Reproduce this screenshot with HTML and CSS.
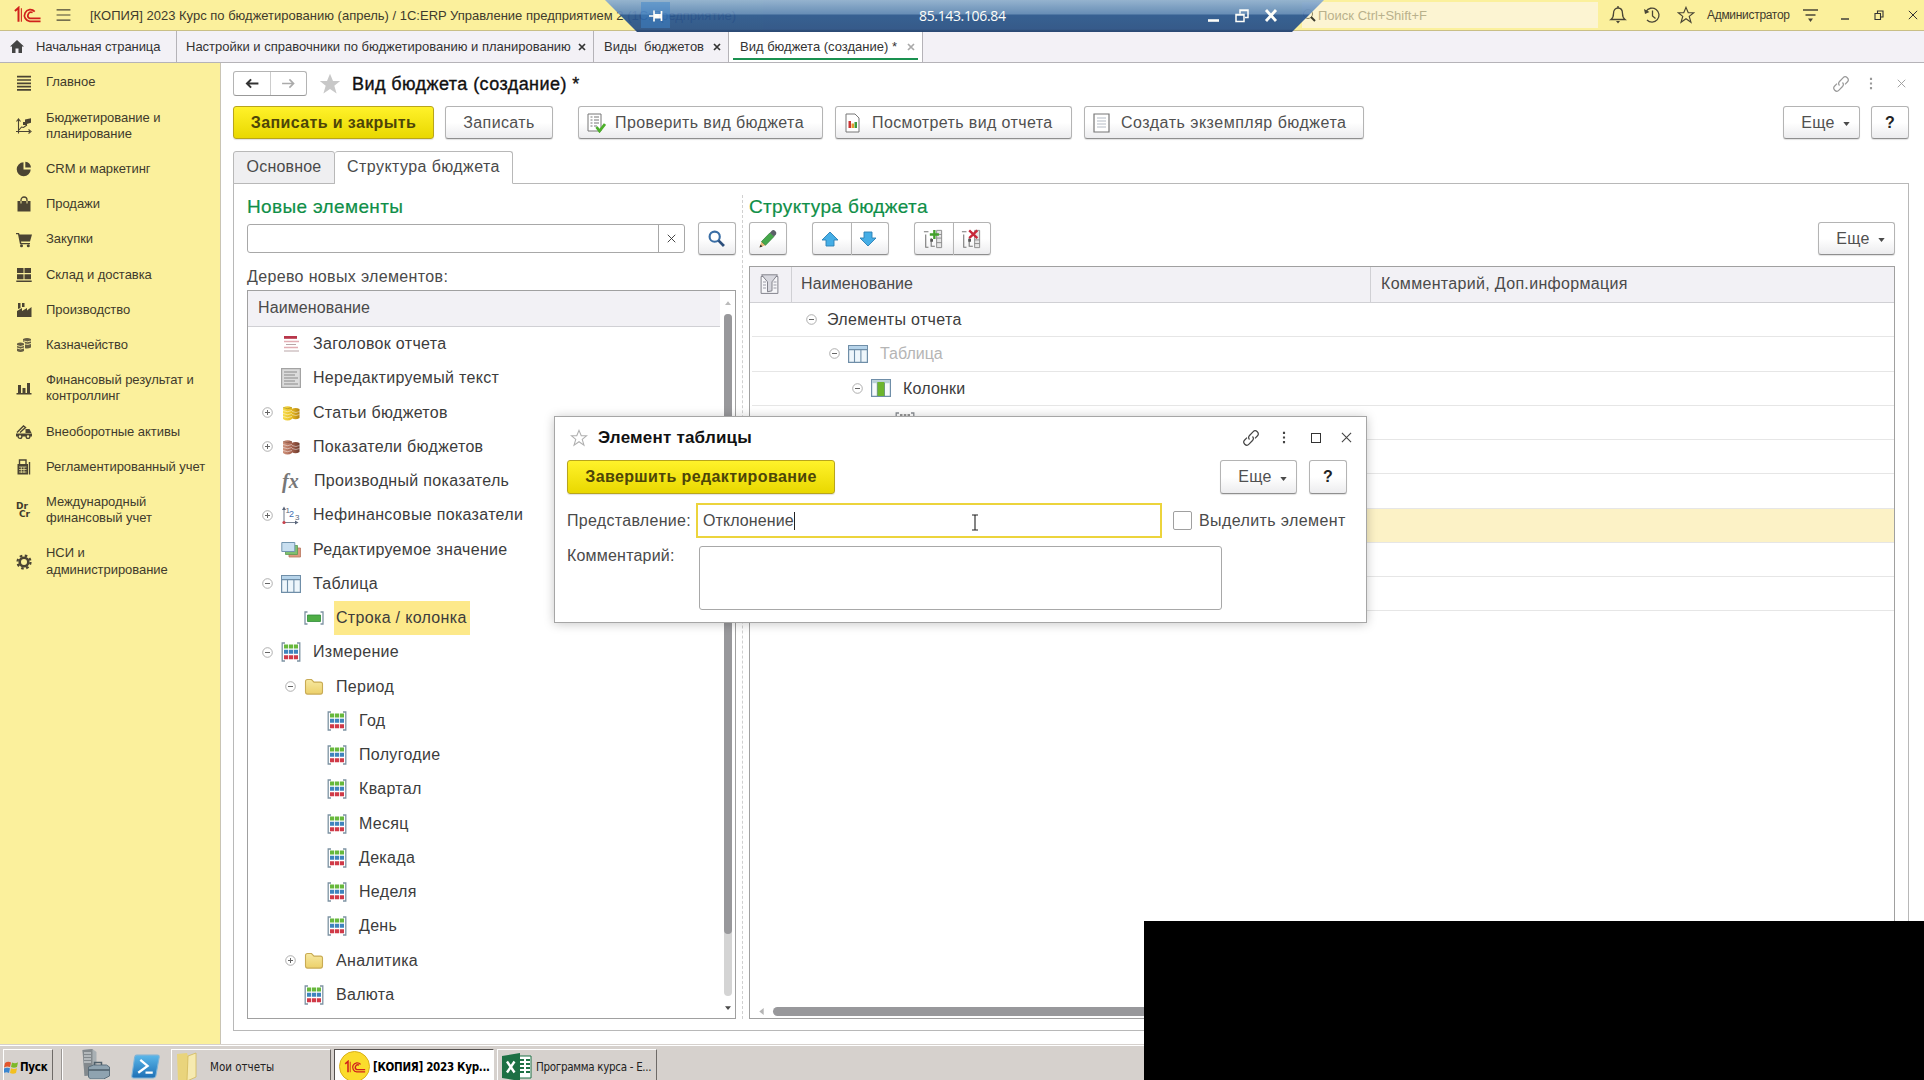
FILE: index.html
```html
<!DOCTYPE html>
<html lang="ru">
<head>
  <meta charset="UTF-8">
  <title>Вид бюджета (создание)</title>
  <link rel="stylesheet" href="styles.css">
</head>
<body>

  <!-- Общие иконки -->
  <svg class="sprite" aria-hidden="true">
    <defs>
      <linearGradient id="gGold" x1="0" x2="1"><stop offset="0" stop-color="#f6dc4a"/><stop offset=".5" stop-color="#e8bd22"/><stop offset="1" stop-color="#b5820f"/></linearGradient>
      <linearGradient id="gBrown" x1="0" x2="1"><stop offset="0" stop-color="#d0947c"/><stop offset=".5" stop-color="#a86450"/><stop offset="1" stop-color="#6e3a2c"/></linearGradient>
      <linearGradient id="gFolder" x1="0" y1="0" x2="0" y2="1"><stop offset="0" stop-color="#f7e9a2"/><stop offset="1" stop-color="#ecd06a"/></linearGradient>
      <linearGradient id="gBlue" x1="0" y1="0" x2="0" y2="1"><stop offset="0" stop-color="#5cb8ea"/><stop offset="1" stop-color="#1d6fb5"/></linearGradient>
    </defs>
    <symbol id="plus" viewBox="0 0 11 11"><circle cx="5.5" cy="5.5" r="4.8" fill="#fff" stroke="#a6a6a6" stroke-width=".9"/><path d="M3 5.5h5M5.5 3v5" stroke="#666" stroke-width="1"/></symbol>
    <symbol id="minus" viewBox="0 0 11 11"><circle cx="5.5" cy="5.5" r="4.8" fill="#fff" stroke="#a6a6a6" stroke-width=".9"/><path d="M3 5.5h5" stroke="#666" stroke-width="1"/></symbol>
    <symbol id="dim" viewBox="0 0 20 20">
      <path d="M4 1H1.2v18H4M16 1h2.8v18H16" fill="none" stroke="#7d93a3" stroke-width="1.3"/>
      <path d="M3 2.500h4.200v4H3zM8 2.500h4v4H8zM12.800 2.500H17v4h-4.200z" fill="#67b83c"/>
      <path d="M3 7.800h4.200v4H3zM8 7.800h4v4H8zM12.800 7.800H17v4h-4.200z" fill="#3f84bd"/>
      <path d="M3 13.200h4.200v4H3zM8 13.200h4v4H8zM12.800 13.200H17v4h-4.200z" fill="#d03a48"/>
    </symbol>
    <symbol id="folder" viewBox="0 0 20 20"><path d="M1.500 4.500q0-2 2-2h4l2.500 2.600h6.500q2 0 2 2v8q0 2-2 2h-13q-2 0-2-2z" fill="url(#gFolder)" stroke="#c9ab54" stroke-width="1.100"/></symbol>
    <symbol id="table" viewBox="0 0 20 18">
      <path d="M.6.6h18.800v16.800H.6z" fill="#eef6fb" stroke="#6f8ea8" stroke-width="1.2"/>
      <path d="M1.200 1.200h17.600v3.200H1.200z" fill="#b4d3ea"/><path d="M6.500 4.400V17M12.900 4.400V17M1 4.600h18" stroke="#6f8ea8" stroke-width="1.1"/>
    </symbol>
    <symbol id="columns" viewBox="0 0 20 18">
      <path d="M.6.6h18.800v16.800H.6z" fill="#f6fafc" stroke="#6f8ea8" stroke-width="1.2"/>
      <path d="M1.200 1.200h17.600v3H1.200z" fill="#b9d0d8"/><path d="M6.300 3h7.200v14H6.300z" fill="#6cb52d"/><path d="M13.500 4v13M6.300 4v13" stroke="#5f8a70" stroke-width=".8"/>
    </symbol>
    <symbol id="coins" viewBox="0 0 20 20">
      <path d="M10.500 6q4-2 8 0v9q-4 2.500-8 0zM2 4.500q4.500-2.600 9 0v11.500q-4.500 3-9 0z"/>
      <path d="M2 7.500q4.500 2.400 9 0M2 10.500q4.500 2.400 9 0M2 13.500q4.500 2.400 9 0M11 8.500q4 2 7.500 0M11 11.500q4 2 7.500 0" fill="none" stroke="#fff" stroke-opacity=".55" stroke-width=".9"/>
      <path d="M2 4.500q4.500 2.400 9 0" fill="none" stroke="#000" stroke-opacity=".25" stroke-width=".8"/>
    </symbol>
    <symbol id="cell" viewBox="0 0 20 14"><path d="M3.500 1H1v12h2.500M16.500 1H19v12h-2.500" fill="none" stroke="#7d93a3" stroke-width="1.300"/><path d="M3.500 4h13v6.500h-13z" fill="#4fae45" stroke="#2f8c3a" stroke-width=".8"/></symbol>
    <symbol id="link" viewBox="0 0 18 18"><path d="M7.500 10.500a3 3 0 0 1 0-4l3.500-3.700a3 3 0 0 1 4.300 4.200L13 9.400M10.500 7.500a3 3 0 0 1 0 4L7 15.200A3 3 0 0 1 2.700 11L5 8.600" fill="none" stroke="currentColor" stroke-width="1.200"/></symbol>
    <symbol id="dots" viewBox="0 0 4 16"><path d="M.7 1h2.600v2.600H.7zM.7 6.700h2.600v2.600H.7zM.7 12.400h2.600V15H.7z" fill="currentColor"/></symbol>
    <symbol id="cross" viewBox="0 0 12 12"><path d="M1 1l10 10M11 1L1 11" stroke="currentColor" stroke-width="1.2" fill="none"/></symbol>
    <symbol id="crossBold" viewBox="0 0 8 8"><path d="M1 1l6 6M7 1L1 7" stroke="currentColor" stroke-width="1.700" fill="none"/></symbol>
    <symbol id="star" viewBox="0 0 20 20"><path d="M10 1.500l2.500 6h6l-4.900 4 1.900 6.500L10 14.100 4.500 18l1.900-6.500-4.900-4h6z"/></symbol>
    <symbol id="caret" viewBox="0 0 8 5"><path d="M0 0h8L4 5z" fill="#4a4a4a"/></symbol>
    <symbol id="logo1c" viewBox="0 0 30 20">
      <path d="M1 5.500L5 2v15.500" fill="none" stroke="currentColor" stroke-width="2.200"/>
      <path d="M8.200 2.500v15M2.500 7" fill="none" stroke="currentColor" stroke-width="1.200"/>
      <path d="M23 6.200A6.500 6.500 0 1 0 17.500 17H29.500M20.700 7.300A3.600 3.600 0 1 0 17.500 13.800H29.500" fill="none" stroke="currentColor" stroke-width="1.900"/>
    </symbol>
  </svg>

  <div class="screen">
    <header class="titlebar">
      <svg class="logo"><use href="#logo1c"/></svg>
      <svg class="burger" viewBox="0 0 15 13"><path d="M0 1h15M0 6.500h15M0 12h15" stroke="#4a4636" stroke-width="1.300"/></svg>
      <span class="app-title">[КОПИЯ] 2023 Курс по бюджетированию (апрель) / 1С:ERP Управление предприятием 2 (1С:Предприятие)</span>
      <div class="search">
        <svg viewBox="0 0 14 14"><circle cx="6" cy="6" r="4.500" fill="none" stroke="#8c8560"/><path d="M9 9l4 4" stroke="#3c3a2c" stroke-width="2"/></svg>
        <span>Поиск Ctrl+Shift+F</span>
      </div>
      <div class="top-icons">
        <svg viewBox="0 0 18 18"><path d="M2 13.500c2-1.500 2.500-3 2.500-6C4.500 4 6.500 2 9 2s4.500 2 4.500 5.500c0 3 .5 4.500 2.500 6z" fill="none" stroke="#4a4636" stroke-width="1.300"/><path d="M7 15h4l-2 2.500zM8.300 0h1.400v2H8.300z" fill="#4a4636"/></svg>
        <svg viewBox="0 0 18 18"><path d="M3 5.500A7 7 0 1 1 4 14" fill="none" stroke="#4a4636" stroke-width="1.300"/><path d="M1 3l1 5 4.500-2z" fill="#4a4636"/><path d="M9.500 4.500V10l3 2.500" fill="none" stroke="#4a4636" stroke-width="1.300"/></svg>
        <svg class="star-line"><use href="#star"/></svg>
      </div>
      <span class="user">Администратор</span>
      <svg class="user-menu" viewBox="0 0 15 13"><path d="M0 1h15M2.500 6h10" stroke="#4a4636" stroke-width="1.300"/><path d="M5 9.500h5L7.500 13z" fill="#4a4636"/></svg>
      <div class="win-btns">
        <svg viewBox="0 0 10 10"><path d="M1 9h8" stroke="#333" stroke-width="1.400"/></svg>
        <svg viewBox="0 0 10 10"><path d="M1 3.500h5.500V9.500H1zM3.500 3.500V1H9v6H6.500" fill="none" stroke="#333" stroke-width="1.100"/></svg>
        <svg><use href="#cross"/></svg>
      </div>
    </header>

    <nav class="open-tabs">
      <div class="open-tab home">
        <svg viewBox="0 0 14 13"><path d="M7 0l7 6.500h-2V13H8.500V8.500h-3V13H2V6.500H0z" fill="#444"/></svg>
        <span>Начальная страница</span>
      </div>
      <div class="open-tab settings"><span>Настройки и справочники по бюджетированию и планированию</span><svg class="tab-x"><use href="#crossBold"/></svg></div>
      <div class="open-tab kinds"><span>Виды&nbsp; бюджетов</span><svg class="tab-x"><use href="#crossBold"/></svg></div>
      <div class="open-tab current"><span>Вид бюджета (создание) *</span><svg class="tab-x dim"><use href="#crossBold"/></svg></div>
    </nav>

    <div class="work">
      <aside class="sidebar">
        <a class="sec"><svg viewBox="0 0 16 16"><path d="M1 1.700h14M1 5h14M1 8.300h14M1 11.600h14M1 14.900h14" stroke="#4b4433" stroke-width="1.700"/></svg><span>Главное</span></a>
        <a class="sec two"><svg viewBox="0 0 16 16"><path d="M2.500 15.500V2M0 13.500h14M.5 3.500L2.500 1l2 2.500M12.500 11.500l2.500 2-2.500 2M3 12l2.500-3 2 .5L11 7" fill="none" stroke="#4b4433" stroke-width="1.100"/><path d="M9 1.500l6-1.300v4.500L9 6.500zM7 4h4v3H7z" fill="#4b4433"/></svg><span>Бюджетирование и<br>планирование</span></a>
        <a class="sec"><svg viewBox="0 0 16 16"><path d="M7.500 1.300V8.500h7.200A7 7 0 1 1 7.500 1.300z" fill="#4b4433"/><path d="M9.300.8A6.600 6.600 0 0 1 15 6.600H9.300z" fill="#4b4433"/></svg><span>CRM и маркетинг</span></a>
        <a class="sec"><svg viewBox="0 0 16 16"><path d="M1.500 5h13v10.500h-13z" fill="#4b4433"/><path d="M5 7.500V4a3 3 0 0 1 6 0v3.500" fill="none" stroke="#4b4433" stroke-width="1.300"/><path d="M5 5v2.500M11 5v2.500" stroke="#fbf0a0" stroke-width="1"/></svg><span>Продажи</span></a>
        <a class="sec"><svg viewBox="0 0 16 16"><path d="M0 1h3l.6 1.500H16L14 9.500H5l.3 1.500H14v1.300H4L2 2.300H0z" fill="#4b4433"/><circle cx="5.500" cy="13.800" r="1.500" fill="#4b4433"/><circle cx="12.300" cy="13.800" r="1.500" fill="#4b4433"/></svg><span>Закупки</span></a>
        <a class="sec"><svg viewBox="0 0 16 16"><path d="M1 1h6.500v5H1zM8.500 1H15v5H8.500zM1 7.200h6.500v5H1zM8.500 7.200H15v5H8.500zM.3 13.500h15.400v1.600H.3z" fill="#4b4433"/></svg><span>Склад и доставка</span></a>
        <a class="sec"><svg viewBox="0 0 16 16"><path d="M1 15V9l5-3v3l5-3v2.500L15.500 5v10zM2 1h2.500v5L2 7zM6 1h2.500v4L6 5z" fill="#4b4433"/></svg><span>Производство</span></a>
        <a class="sec"><svg viewBox="0 0 16 16"><path d="M1 6.500q3.500-2 7 0v7.500q-3.500 2-7 0zM7 2q4-1.800 8 0v8.500q-3 1.500-6 .8V5.500Q8 5 7 4.800z" fill="#4b4433" fill-opacity=".85"/><path d="M1 8.500q3.500 2 7 0M1 11q3.500 2 7 0M7.500 4q4 1.500 7.500 0M9 7q3 1 6-.5" stroke="#fbf0a0" stroke-width=".9" fill="none"/></svg><span>Казначейство</span></a>
        <a class="sec two"><svg viewBox="0 0 16 16"><path d="M2 5h3v8H2zM6.500 8h3v5h-3zM11 3h3v10h-3zM.5 13h15v1.500H.5z" fill="#4b4433"/></svg><span>Финансовый результат и<br>контроллинг</span></a>
        <a class="sec"><svg viewBox="0 0 16 16"><path d="M0 9.500h16v3H0zM9.500 5h4l2 4H9.500z" fill="#4b4433"/><path d="M1 8.500L7.500 2l2 1.500L4 8.500" fill="none" stroke="#4b4433" stroke-width="1.400"/><circle cx="4" cy="12.500" r="1.900" fill="#fbf0a0" stroke="#4b4433" stroke-width="1.300"/><circle cx="12" cy="12.500" r="1.900" fill="#fbf0a0" stroke="#4b4433" stroke-width="1.300"/></svg><span>Внеоборотные активы</span></a>
        <a class="sec"><svg viewBox="0 0 16 16"><path d="M1.500 5h10.500v10.500H1.500z" fill="#4b4433"/><path d="M3.500 5V1h6.500v4" fill="none" stroke="#4b4433" stroke-width="1.400"/><path d="M13.500 3v12.500" stroke="#4b4433" stroke-width="1.400"/><path d="M3 8h7.500M3 10.500h7.500M3 13h7.500M5.300 8v6M8 8v6" stroke="#fbf0a0" stroke-width=".7"/></svg><span>Регламентированный учет</span></a>
        <a class="sec two"><b class="drcr">Dr<i>Cr</i></b><span>Международный<br>финансовый учет</span></a>
        <a class="sec two"><svg viewBox="0 0 16 16"><circle cx="8" cy="8" r="4.300" fill="none" stroke="#4b4433" stroke-width="2.600"/><circle cx="8" cy="8" r="6.500" fill="none" stroke="#4b4433" stroke-width="2.200" stroke-dasharray="2.600 2.505"/></svg><span>НСИ и<br>администрирование</span></a>
      </aside>

      <main class="form">
        <div class="form-head">
          <div class="nav-btns">
            <svg viewBox="0 0 16 12"><path d="M15 6H3M7 1.500L2.500 6 7 10.500" fill="none" stroke="#333" stroke-width="2.200"/></svg>
            <svg viewBox="0 0 16 12"><path d="M1 6h12M9 1.500L13.500 6 9 10.500" fill="none" stroke="#aaa" stroke-width="1.800"/></svg>
          </div>
          <svg class="fav"><use href="#star"/></svg>
          <h1>Вид бюджета (создание) *</h1>
          <div class="head-tools">
            <svg class="i-link"><use href="#link"/></svg>
            <svg class="i-dots"><use href="#dots"/></svg>
            <svg class="i-x"><use href="#cross"/></svg>
          </div>
        </div>

        <div class="commands">
          <button class="btn primary b-save-close">Записать и закрыть</button>
          <button class="btn b-save">Записать</button>
          <button class="btn with-icon b-check"><svg viewBox="0 0 20 20"><path d="M2 1h13v17H2z" fill="#fff" stroke="#777"/><path d="M4.500 4h2M8 4h5M4.500 7h2M8 7h5M4.500 10h2M8 10h5M4.500 13h2M8 13h3" stroke="#777"/><path d="M10.500 14l3 4L19 11" fill="none" stroke="#4caf2a" stroke-width="2.800"/></svg>Проверить вид бюджета</button>
          <button class="btn with-icon b-view"><svg viewBox="0 0 20 20"><path d="M3 1h9l4 4v14H3z" fill="#fff" stroke="#777"/><path d="M5.500 8h2.500v7H5.500z" fill="#c33"/><path d="M8.500 10.500H11V15H8.500z" fill="#e39a2e"/><path d="M11.500 9H14v6h-2.500z" fill="#3d9a3a"/></svg>Посмотреть вид отчета</button>
          <button class="btn with-icon b-create"><svg viewBox="0 0 20 20"><path d="M2 1h15v18H2z" fill="#fff" stroke="#777" stroke-width="1.200"/><path d="M5 5h9M5 8h9M5 11h9M5 14h9" stroke="#b5bcc6"/></svg>Создать экземпляр бюджета</button>
          <button class="btn more push">Еще<svg><use href="#caret"/></svg></button>
          <button class="btn help">?</button>
        </div>

        <div class="page-tabs">
          <div class="page-tab t1">Основное</div>
          <div class="page-tab t2 active">Структура бюджета</div>
        </div>

        <div class="panel">
          <section class="left">
            <h2>Новые элементы</h2>
            <div class="find-row">
              <div class="find"><span></span><svg><use href="#cross"/></svg></div>
              <button class="btn find-btn"><svg viewBox="0 0 16 16"><circle cx="6.300" cy="6.300" r="4.800" fill="none" stroke="#3a6ea5" stroke-width="2"/><path d="M10 10l5 5" stroke="#2c4f7c" stroke-width="2.600"/></svg></button>
            </div>
            <div class="label">Дерево новых элементов:</div>
            <div class="tree">
              <div class="tree-list">
                <div class="thead">Наименование</div>
                <div class="row"><i></i><svg viewBox="0 0 20 20"><path d="M3 2h13v2.800H3z" fill="#b8364a"/><path d="M3 7.500h15M3 13.500h14" stroke="#e2aeb4" stroke-width="1.300"/><path d="M5 10.500h10M3 17h15" stroke="#b9a6a8" stroke-width="1.200"/></svg><span>Заголовок отчета</span></div>
                <div class="row"><i></i><svg viewBox="0 0 20 20"><path d="M.6.6h18.800v18.800H.6z" fill="#dcdcdc" stroke="#a3a3a3" stroke-width="1.200"/><path d="M3 4h13M3 7h11M3 10h14M3 13h11M3 16h14" stroke="#8a8a8a" stroke-width="1.200"/></svg><span>Нередактируемый текст</span></div>
                <div class="row"><svg class="ex"><use href="#plus"/></svg><svg fill="url(#gGold)"><use href="#coins"/></svg><span>Статьи бюджетов</span></div>
                <div class="row"><svg class="ex"><use href="#plus"/></svg><svg fill="url(#gBrown)"><use href="#coins"/></svg><span>Показатели бюджетов</span></div>
                <div class="row"><i></i><b class="fx">fx</b><span>Производный показатель</span></div>
                <div class="row"><svg class="ex"><use href="#plus"/></svg><svg viewBox="0 0 20 20"><path d="M3 4v13.500h12" fill="none" stroke="#7a8494" stroke-width="1.100"/><path d="M1 5l2-3.500L5 5zM14 15.500l3.500 2-3.500 2z" fill="#59657a"/><circle cx="3" cy="17.500" r="1.600" fill="#c8414b"/><text x="4.500" y="7.500" class="tiny">1</text><text x="8" y="12" class="tiny mid">2</text><text x="14" y="14.500" class="tiny">3</text></svg><span>Нефинансовые показатели</span></div>
                <div class="row"><i></i><svg viewBox="0 0 20 20"><path d="M8 8h11.500v9H8z" fill="#dd9a80" stroke="#b9765e" stroke-width=".8"/><path d="M4.500 5.500h12v9h-12z" fill="#7fbf6f" stroke="#5c9a53" stroke-width=".8"/><path d="M.8 2.500h13v9H.8z" fill="#c8dff0" stroke="#7296b0"/></svg><span>Редактируемое значение</span></div>
                <div class="row"><svg class="ex"><use href="#minus"/></svg><svg><use href="#table"/></svg><span>Таблица</span></div>
                <div class="row l1"><i></i><svg class="low"><use href="#cell"/></svg><span class="picked">Строка / колонка</span></div>
                <div class="row"><svg class="ex"><use href="#minus"/></svg><svg><use href="#dim"/></svg><span>Измерение</span></div>
                <div class="row l1"><svg class="ex"><use href="#minus"/></svg><svg><use href="#folder"/></svg><span>Период</span></div>
                <div class="row l2"><i></i><svg><use href="#dim"/></svg><span>Год</span></div>
                <div class="row l2"><i></i><svg><use href="#dim"/></svg><span>Полугодие</span></div>
                <div class="row l2"><i></i><svg><use href="#dim"/></svg><span>Квартал</span></div>
                <div class="row l2"><i></i><svg><use href="#dim"/></svg><span>Месяц</span></div>
                <div class="row l2"><i></i><svg><use href="#dim"/></svg><span>Декада</span></div>
                <div class="row l2"><i></i><svg><use href="#dim"/></svg><span>Неделя</span></div>
                <div class="row l2"><i></i><svg><use href="#dim"/></svg><span>День</span></div>
                <div class="row l1"><svg class="ex"><use href="#plus"/></svg><svg><use href="#folder"/></svg><span>Аналитика</span></div>
                <div class="row l1"><i></i><svg><use href="#dim"/></svg><span>Валюта</span></div>
              </div>
              <div class="vscroll">
                <svg class="up" viewBox="0 0 8 5"><path d="M0 5h8L4 0z" fill="#bbb"/></svg>
                <div class="vtrack"><div class="vthumb"></div></div>
                <svg class="down"><use href="#caret"/></svg>
              </div>
            </div>
          </section>

          <div class="splitter"></div>

          <section class="right">
            <h2>Структура бюджета</h2>
            <div class="tools">
              <button class="btn tool"><svg viewBox="0 0 20 20"><path d="M1.500 18.500l2-6 4 3.800z" fill="#e8b878"/><path d="M1.500 18.500l1-3 2 2z" fill="#333"/><path d="M3.500 12.500L12 3.800l4 3.700-8.500 8.800z" fill="#45a84b" stroke="#2c7a34" stroke-width=".7"/><path d="M12 3.800l2-2.300q1.500-1 3.300.6t.7 3.300L16 7.500z" fill="#5b6068"/></svg></button>
              <div class="pair arrows">
                <button class="btn tool"><svg viewBox="0 0 20 20"><path d="M10 3l8 8h-4v6H6v-6H2z" fill="#45aee6" stroke="#2b7fb3" stroke-width=".9"/></svg></button>
                <button class="btn tool"><svg viewBox="0 0 20 20"><path d="M10 17l8-8h-4V3H6v6H2z" fill="#45aee6" stroke="#2b7fb3" stroke-width=".9"/></svg></button>
              </div>
              <div class="pair">
                <button class="btn tool"><svg viewBox="0 0 20 22"><path d="M0 3h5M2 6v14h3M8 10v9h4" fill="none" stroke="#777" stroke-width="1.200"/><path d="M14 1.500h5.500v19H14z" fill="#e6e6e6" stroke="#888"/><path d="M14 6h5.500M14 10h5.500M14 15h5.500" stroke="#888"/><path d="M7 11h3v3H7z" fill="#555"/><path d="M11.500 1v10M6.500 6h10" stroke="#43a02c" stroke-width="2.600"/></svg></button>
                <button class="btn tool"><svg viewBox="0 0 20 22"><path d="M0 3h5M2 6v14h3M8 10v9h4" fill="none" stroke="#777" stroke-width="1.200"/><path d="M14 1.500h5.500v19H14z" fill="#e6e6e6" stroke="#888"/><path d="M14 12h5.500M14 16h5.500" stroke="#888"/><path d="M7 11h3v3H7z" fill="#555"/><path d="M8 1.500l9 8.500M17 1.500L8 10" stroke="#c8283a" stroke-width="2.600"/></svg></button>
              </div>
              <button class="btn more push">Еще<svg><use href="#caret"/></svg></button>
            </div>
            <div class="grid">
              <div class="ghead">
                <div class="c-mark"><svg viewBox="0 0 18 20"><path d="M.6 2.500h16.800v16.900H.6z" fill="#f6f6f9" stroke="#83838c"/><path d="M1 .8h16l-5.500 7v9l-4.500 1V7.800z" fill="#d7d7de" stroke="#83838c"/><path d="M2.500 8h3M2.500 11h3M2.500 14h3M13 8h3M13 11h3M13 14h3" stroke="#9a9aa5"/></svg></div>
                <div class="c-name">Наименование</div>
                <div class="c-note">Комментарий, Доп.информация</div>
              </div>
              <div class="grow r0"><svg class="ex"><use href="#minus"/></svg><span>Элементы отчета</span></div>
              <div class="grow r1"><svg class="ex"><use href="#minus"/></svg><svg class="ic"><use href="#table"/></svg><span>Таблица</span></div>
              <div class="grow r2"><svg class="ex"><use href="#minus"/></svg><svg class="ic"><use href="#columns"/></svg><span>Колонки</span></div>
              <div class="grow r3"><svg class="ic" viewBox="0 0 20 20"><path d="M4 1H1.200v18H4M16 1h2.800v18H16" fill="none" stroke="#8a8f94" stroke-width="1.300"/><path d="M5 3h2.500M8.800 3h2.500M12.500 3H15" stroke="#777" stroke-width="1.600"/></svg></div>
              <div class="grow"></div>
              <div class="grow"></div>
              <div class="grow selected"></div>
              <div class="grow"></div>
              <div class="grow"></div>
              <div class="hscroll">
                <svg viewBox="0 0 5 8"><path d="M5 0v8L0 4z" fill="#b5b5b5"/></svg>
                <div class="hthumb"></div>
              </div>
            </div>
          </section>
        </div>
      </main>
    </div>

    <footer class="taskbar">
      <div class="start"><svg viewBox="0 0 16 16"><path d="M1 4q3-2 6-.5L6 8Q3 6.800 0 8.500z" fill="#e2562c"/><path d="M8 3.500q3 1.500 6-.2L13 8q-3 1.500-6 0z" fill="#7db928"/><path d="M0 9.500q3-1.500 6-.3L5 14q-2.500-1.400-5.500 0z" fill="#3b86d0"/><path d="M7 9.300q3 1.500 6 0L12 14q-3 1.500-6 0z" fill="#f3c01e"/></svg><b>Пуск</b></div>
      <div class="sep"></div>
      <svg class="q-server" viewBox="0 0 28 30"><path d="M1 1l10-1 4 3v23L3 27z" fill="#a9b0b4"/><path d="M1 1l10-1v26l-8 1z" fill="#83898d"/><path d="M2.500 4h7M2.500 7h7M2.500 10h7M2.500 13h7" stroke="#e3e7e9" stroke-width="1.200"/><path d="M7 18l5-2h13l3 2v9l-6 3H9l-2-2z" fill="#8fa3b0" stroke="#5c6f7c"/><path d="M7 21h21M13 16v-2.500h7V16" fill="none" stroke="#4f5f6a" stroke-width="1.500"/></svg>
      <svg class="q-ps" viewBox="0 0 28 24"><path d="M5.500 1h20q2 0 1.700 2L24 21q-.5 2-2.500 2h-19q-2 0-1.700-2L3.500 3Q4 1 5.500 1z" fill="url(#gBlue)" stroke="#7fb4d8"/><path d="M9 5.500l7 6L7 18M14 18h7" fill="none" stroke="#fff" stroke-width="2.200"/></svg>
      <div class="task folder"><svg viewBox="0 0 22 30"><path d="M1 2l10-1 1 3v24L2 29z" fill="#e9d47c"/><path d="M12 4l8-3v24l-9 4z" fill="#f6eab0" stroke="#d3b95a" stroke-width=".8"/></svg><span>Мои отчеты</span></div>
      <div class="task onec"><div class="ball"><svg><use href="#logo1c"/></svg></div><span>[КОПИЯ] 2023 Кур...</span></div>
      <div class="task excel"><svg viewBox="0 0 30 28"><path d="M16 3h13v22H16z" fill="#fff" stroke="#1d7044"/><path d="M18 7h4M24 7h4M18 11h4M24 11h4M18 15h4M24 15h4M18 19h4M24 19h4" stroke="#1d7044" stroke-width="2"/><path d="M0 3l18-3v28L0 25z" fill="#1d7044"/><path d="M5 8.500l7.500 11M12.500 8.500L5 19.500" stroke="#fff" stroke-width="2.400"/></svg><span>Программа курса - E...</span></div>
    </footer>
  </div>

  <!-- Окно редактирования элемента -->
  <div class="dialog">
    <div class="dlg-head">
      <svg class="dlg-star"><use href="#star"/></svg>
      <h3>Элемент таблицы</h3>
      <svg class="i-link"><use href="#link"/></svg>
      <svg class="i-dots"><use href="#dots"/></svg>
      <div class="i-max"></div>
      <svg class="i-x"><use href="#cross"/></svg>
    </div>
    <div class="dlg-cmds">
      <button class="btn primary b-finish">Завершить редактирование</button>
      <button class="btn more push">Еще<svg><use href="#caret"/></svg></button>
      <button class="btn help">?</button>
    </div>
    <div class="field">
      <label class="f-view">Представление:</label>
      <div class="edit"><span>Отклонение</span>
        <svg class="ibeam" viewBox="0 0 8 17"><path d="M1 1h2.500L4 1.500 4.500 1H7M4 1v15M1 16h2.500l.5-.5.5.5H7" fill="none" stroke="#222" stroke-width="1.100"/></svg>
      </div>
      <div class="check"></div>
      <span class="check-text">Выделить элемент</span>
    </div>
    <div class="field memo">
      <label class="f-comment">Комментарий:</label>
      <div class="area"></div>
    </div>
  </div>

  <!-- Панель удаленного рабочего стола -->
  <div class="rdp">
    <div class="pin"><svg viewBox="0 0 14 14"><path d="M0 7h5M5 1.500v11M12.500 2v10" fill="none" stroke="#fff" stroke-width="1.700"/><path d="M5 5h7v4.500H5z" fill="#fff"/></svg></div>
    <span>85.143.106.84</span>
    <div class="rdp-btns">
      <svg viewBox="0 0 14 14"><path d="M2 12h11" stroke="#fff" stroke-width="2.600"/></svg>
      <svg viewBox="0 0 14 14"><path d="M1 6h8v7H1zM1 6.500h8M5 5V1.500h8V9h-3M5 2h8" fill="none" stroke="#fff" stroke-width="1.500"/></svg>
      <svg viewBox="0 0 14 14"><path d="M2 1.500l10 11M12 1.500l-10 11" stroke="#fff" stroke-width="2.800"/></svg>
    </div>
  </div>

  <div class="camera"></div>

</body>
</html>
```
FILE: styles.css
```css
* {
  box-sizing: border-box;
}

body {
  margin: 0;
  width: 1924px;
  height: 1080px;
  overflow: hidden;
  position: relative;
  background: #fff;
  color: #4a4a4a;
  font-family: "Liberation Sans", Arial, sans-serif;
  font-size: 16px;
}

h1, h2, h3 {
  margin: 0;
  font-weight: normal;
}

svg {
  display: block;
  flex: none;
}

.sprite {
  position: absolute;
  width: 0;
  height: 0;
}

.screen {
  display: flex;
  flex-direction: column;
  height: 1080px;
}

/* Заголовок приложения */
.titlebar {
  display: flex;
  align-items: center;
  height: 31px;
  padding-left: 12px;
  background: #fbf09c;
  border-bottom: 1px solid #c9bf86;
  color: #3f3b2c;
  font-size: 13px;
  white-space: nowrap;
}

.logo {
  width: 31px;
  height: 18px;
  color: #d0211c;
}

.burger {
  width: 15px;
  height: 12px;
  margin: 0 19px 0 13px;
}

.app-title {
  width: 1212px;
}

.search {
  display: flex;
  align-items: center;
  width: 296px;
  height: 26px;
  background: #fcf4d2;
  color: #b9b18c;
}

.search svg {
  width: 14px;
  height: 14px;
  margin: 0 2px 0 0;
}

.top-icons {
  display: flex;
  gap: 16px;
  margin-left: 11px;
}

.top-icons svg {
  width: 18px;
  height: 18px;
}

.star-line {
  fill: none;
  stroke: #4a4636;
  stroke-width: 1.3;
}

.user {
  width: 83px;
  margin-left: 12px;
  font-size: 12px;
  letter-spacing: -0.3px;
}

.user-menu {
  width: 15px;
  height: 13px;
  margin-left: 13px;
}

.win-btns {
  display: flex;
  gap: 24px;
  margin-left: 22px;
}

.win-btns svg {
  width: 10px;
  height: 10px;
  color: #333;
}

/* Открытые окна */
.open-tabs {
  display: flex;
  height: 32px;
  background: #f3f1f6;
  border-bottom: 1px solid #b5b3b8;
  font-size: 13px;
  color: #333;
  white-space: nowrap;
}

.open-tab {
  display: flex;
  align-items: center;
  border-right: 1px solid #b5b3b8;
}

.home {
  width: 177px;
  padding-left: 10px;
  gap: 12px;
  letter-spacing: -0.08px;
}

.home svg {
  width: 14px;
  height: 13px;
}

.settings {
  width: 417px;
  padding-left: 9px;
}

.kinds {
  width: 135px;
  padding-left: 10px;
}

.current {
  width: 194px;
  padding-left: 11px;
  background: #fff;
  box-shadow: inset 4px 0 #fff, inset -4px 0 #fff, inset 0 -2px #fff, inset 0 -4px #1a9150;
}

.tab-x {
  width: 8px;
  height: 8px;
  margin: 0 7px 0 auto;
  color: #333;
}

.tab-x.dim {
  color: #aaa;
}

.work {
  display: flex;
  height: 981px;
}

/* Разделы */
.sidebar {
  width: 221px;
  padding-top: 2px;
  background: #fbf09c;
  border-right: 1px solid #c9c4b4;
  color: #3f3b2c;
  font-size: 13px;
  line-height: 16.2px;
}

.sec {
  display: flex;
  align-items: center;
  height: 35.2px;
  padding-left: 16px;
  gap: 14px;
  white-space: nowrap;
  letter-spacing: -0.05px;
}

.sec.two {
  height: 51.4px;
}

.sec svg {
  width: 16px;
  height: 16px;
}

.drcr {
  width: 16px;
  font: bold 9px/8px "DejaVu Sans", sans-serif;
}

.drcr i {
  display: block;
  margin-left: 3px;
  font-style: normal;
}

/* Форма */
.form {
  width: 1703px;
  padding: 8px 15px 0 12px;
}

.form-head {
  display: flex;
  align-items: center;
  height: 25px;
}

.nav-btns {
  display: flex;
  width: 74px;
  height: 25px;
  border: 1px solid #b4b4b4;
  border-bottom-color: #999;
  border-radius: 3px;
}

.nav-btns svg {
  width: 36px;
  height: 11px;
  margin: 6px 0 0;
}

.nav-btns svg + svg {
  height: 23px;
  margin: 0;
  padding: 6px 0;
  border-left: 1px solid #ccc;
}

.fav {
  width: 24px;
  height: 24px;
  margin: 0 10px 0 11px;
  fill: #c8c8c8;
}

h1 {
  padding-top: 2px;
  color: #111;
  font-size: 18px;
  white-space: nowrap;
  letter-spacing: 0.43px;
  -webkit-text-stroke: 0.35px #111;
}

.head-tools {
  display: flex;
  align-items: center;
  margin-left: auto;
  color: #999;
}

.i-link {
  width: 18px;
  height: 18px;
}

.i-dots {
  width: 4px;
  height: 13px;
}

.head-tools .i-dots {
  margin: 0 24px 0 19px;
}

.head-tools .i-x {
  width: 9px;
  height: 9px;
  margin-right: 3px;
}

.btn {
  display: flex;
  align-items: center;
  justify-content: center;
  height: 33px;
  padding: 0;
  border: 1px solid #b4b4b4;
  border-bottom-color: #8f8f8f;
  border-radius: 3px;
  background: linear-gradient(#fff 50%, #ececee);
  color: #505050;
  font-family: inherit;
  font-size: 16px;
  white-space: nowrap;
  letter-spacing: 0.38px;
  box-shadow: 0 1px 1px rgba(0, 0, 0, 0.12);
}

.primary {
  border-color: #b8a51c;
  background: linear-gradient(#fff22a, #e9d800);
  color: #4d4508;
  font-weight: bold;
}

.commands {
  display: flex;
  margin-top: 10px;
}

.with-icon {
  justify-content: flex-start;
  padding-left: 7px;
  gap: 9px;
}

.with-icon svg {
  width: 20px;
  height: 20px;
}

.b-save-close { width: 201px; }
.b-save { width: 108px; margin-left: 11px; }
.b-check { width: 245px; margin-left: 25px; }
.b-view { width: 237px; margin-left: 12px; }
.b-create { width: 280px; margin-left: 12px; letter-spacing: 0.5px; }

.push {
  margin-left: auto;
}

.more {
  width: 77px;
  gap: 8px;
  padding-left: 8px;
}

.more svg {
  width: 7px;
  height: 4px;
  margin-top: 3px;
}

.help {
  width: 38px;
  margin-left: 11px;
  color: #222;
  font-weight: bold;
}

.page-tabs {
  display: flex;
  height: 33px;
  margin: 12px 0 -1px;
}

.page-tab {
  height: 33px;
  border: 1px solid #b8b8b8;
  border-radius: 3px 3px 0 0;
  background: #efeff1;
  line-height: 30px;
  text-align: center;
  letter-spacing: 0.2px;
}

.page-tab.active {
  border-bottom-color: #fff;
  border-left: 0;
  background: #fff;
  position: relative;
  letter-spacing: 0.42px;
}

.t1 { width: 102px; }
.t2 { width: 178px; }

.panel {
  display: flex;
  width: 1676px;
  height: 848px;
  padding: 11px 13px 11px;
  border: 1px solid #b8b8b8;
}

.left {
  display: flex;
  flex-direction: column;
  width: 489px;
}

h2 {
  height: 27px;
  color: #0f8f48;
  font-size: 19px;
  line-height: 24px;
  white-space: nowrap;
  letter-spacing: 0.35px;
  -webkit-text-stroke: 0.2px #0f8f48;
}

.find-row {
  display: flex;
  align-items: center;
  height: 33px;
}

.find {
  display: flex;
  width: 438px;
  height: 29px;
  margin-right: 13px;
  border: 1px solid #a8a8a8;
  border-radius: 3px;
}

.find span {
  flex: 1;
  border-right: 1px solid #a8a8a8;
}

.find svg {
  width: 9px;
  height: 9px;
  margin: 9px 8px;
  color: #333;
}

.find-btn {
  width: 38px;
  padding-right: 2px;
}

.find-btn svg {
  width: 17px;
  height: 17px;
}

.label {
  height: 35px;
  line-height: 43px;
  letter-spacing: 0.35px;
}

.tree {
  display: flex;
  height: 729px;
  border: 1px solid #a0a0a0;
}

.tree-list {
  width: 472px;
}

.thead {
  height: 36px;
  padding-left: 10px;
  border-bottom: 1px solid #d0d0d4;
  background: #f2f1f5;
  line-height: 34px;
  letter-spacing: 0.1px;
}

.row {
  display: flex;
  align-items: center;
  height: 34.25px;
  padding-left: 14px;
  color: #3c3c3c;
  white-space: nowrap;
  letter-spacing: 0.32px;
}

.row i,
.ex {
  width: 11px;
  height: 11px;
  flex: none;
}

.row svg:not(.ex) {
  width: 20px;
  height: 20px;
  margin: 0 12px 0 8px;
}

.row svg.low {
  height: 14px;
}

.l1 { padding-left: 37px; }
.l2 { padding-left: 60px; }

.picked {
  height: 34px;
  margin-left: -2px;
  padding: 0 3px 0 2px;
  background: #fde98a;
  line-height: 34px;
}

.fx {
  width: 28px;
  margin: 0 4px 0 9px;
  color: #777;
  font: italic bold 20px/20px "Liberation Serif", serif;
  letter-spacing: 0;
}

.tiny {
  fill: #59657a;
  font-size: 8px;
}

.tiny.mid {
  fill: #3f6fb5;
  font-size: 9px;
}

.vscroll {
  display: flex;
  flex-direction: column;
  align-items: center;
  width: 15px;
  padding-top: 10px;
}

.vscroll .up {
  width: 6px;
  height: 4px;
}

.vtrack {
  width: 8px;
  height: 682px;
  margin: 9px 0 10px;
  border-radius: 4px;
  background: #d4d4d4;
}

.vthumb {
  height: 620px;
  border-radius: 4px;
  background: #98989b;
}

.down {
  width: 6px;
  height: 4px;
}

.splitter {
  width: 0;
  margin: 0 6px 0 6px;
  border-left: 1px dashed #d0d0d0;
}

/* Структура */
.right {
  width: 1146px;
}

.tools {
  display: flex;
}

.tool {
  width: 38px;
}

.tool svg {
  width: 20px;
  height: 20px;
}

.pair {
  display: flex;
  margin-left: 25px;
}

.pair .tool {
  padding-right: 2px;
}

.arrows .tool {
  padding-right: 4px;
}

.pair .tool:first-child {
  width: 39px;
  border-right: 0;
  border-radius: 3px 0 0 3px;
}

.pair .tool:last-child {
  border-radius: 0 3px 3px 0;
}

.grid {
  display: flex;
  flex-direction: column;
  height: 753px;
  margin-top: 11px;
  border: 1px solid #a0a0a0;
}

.ghead {
  display: flex;
  height: 36px;
  border-bottom: 1px solid #d0d0d4;
  background: #f2f1f5;
  line-height: 33px;
}

.c-mark {
  width: 42px;
  padding: 7px 0 0 10px;
  border-right: 1px solid #d0d0d4;
}

.c-mark svg {
  width: 19px;
  height: 20px;
}

.c-name {
  width: 579px;
  padding-left: 9px;
  border-right: 1px solid #d0d0d4;
  letter-spacing: 0.1px;
}

.c-note {
  padding-left: 10px;
  letter-spacing: 0.32px;
}

.grow {
  display: flex;
  align-items: center;
  height: 34.25px;
  margin-left: 2px;
  border-bottom: 1px solid #e6e6e6;
  color: #3c3c3c;
  letter-spacing: 0.32px;
}

.grow .ic {
  width: 20px;
  height: 18px;
  margin-right: 12px;
}

.grow span {
  padding-top: 1px;
}

.r0 { padding-left: 54px; gap: 10px; }
.r1 { padding-left: 77px; color: #b5b5b5; letter-spacing: 0; }
.r2 { padding-left: 100px; letter-spacing: 0.2px; }
.r3 { padding-left: 143px; }

.r1 .ex,
.r2 .ex {
  margin-right: 8px;
}

.grow.r3 .ic {
  height: 20px;
}

.selected {
  background: #fcf2c6;
}

.hscroll {
  display: flex;
  align-items: center;
  margin: auto 0 2px 9px;
}

.hscroll svg {
  width: 5px;
  height: 7px;
}

.hthumb {
  width: 1090px;
  height: 9px;
  margin-left: 9px;
  border-radius: 5px;
  background: #98989b;
}

/* Диалог */
.dialog {
  position: absolute;
  left: 554px;
  top: 416px;
  width: 813px;
  height: 207px;
  padding: 9px 12px;
  border: 1px solid #a6a6a6;
  background: #fff;
  box-shadow: 0 1px 10px rgba(0, 0, 0, 0.22);
}

.dlg-head {
  display: flex;
  align-items: center;
  height: 23px;
  color: #444;
}

.dlg-star {
  width: 18px;
  height: 18px;
  margin: 0 10px 0 3px;
  fill: none;
  stroke: #b0b0b0;
  stroke-width: 1.2;
}

h3 {
  width: 644px;
  color: #111;
  font-size: 17px;
  font-weight: bold;
  letter-spacing: 0.2px;
}

.dlg-head .i-dots {
  margin: 0 25px 0 22px;
}

.i-max {
  width: 10px;
  height: 10px;
  margin-right: 20px;
  border: 1.5px solid #333;
}

.dlg-head .i-x {
  width: 11px;
  height: 11px;
}

.dlg-cmds {
  display: flex;
  width: 780px;
  margin-top: 11px;
}

.b-finish {
  width: 268px;
}

.dlg-cmds .btn {
  height: 34px;
}

.dlg-cmds .help {
  margin-left: 12px;
}

.field {
  display: flex;
  align-items: center;
  height: 35px;
  margin-top: 9px;
  white-space: nowrap;
}

.f-view {
  width: 129px;
  letter-spacing: 0.3px;
}

.edit {
  position: relative;
  display: flex;
  align-items: center;
  width: 466px;
  height: 35px;
  padding-left: 5px;
  border: 2px solid #ecd43c;
  letter-spacing: 0.1px;
}

.edit span {
  border-right: 1px solid #222;
}

.ibeam {
  position: absolute;
  left: 273px;
  top: 9px;
  width: 8px;
  height: 17px;
}

.check {
  width: 19px;
  height: 19px;
  margin: 0 7px 0 11px;
  border: 1px solid #a0a0a0;
  border-radius: 2px;
}

.check-text {
  letter-spacing: 0.4px;
}

.memo {
  align-items: flex-start;
  height: 65px;
  margin-top: 8px;
}

.f-comment {
  width: 132px;
  line-height: 19px;
  letter-spacing: 0.2px;
}

.area {
  width: 523px;
  height: 64px;
  border: 1px solid #a8a8a8;
  border-radius: 3px;
}

/* Удаленный рабочий стол */
.rdp {
  position: absolute;
  left: 605px;
  top: 0;
  display: flex;
  align-items: center;
  width: 719px;
  height: 32px;
  padding: 0 46px 2px 36px;
  background: linear-gradient(#8fb0d2 0, #5f88b8 14px, #2b5892 15px, #2a5189 29px, #1d3c68 32px);
  clip-path: polygon(0 0, 100% 0, 687px 100%, 32px 100%);
  color: #fff;
  font: 14px "Open Sans", sans-serif;
  opacity: 0.94;
}

.pin {
  width: 29px;
  height: 26px;
  padding: 5px 8px;
  background: rgba(50, 125, 205, 0.5);
}

.pin svg {
  width: 14px;
  height: 18px;
}

.rdp span {
  margin-left: 249px;
  letter-spacing: -0.35px;
}

.rdp-btns {
  display: flex;
  gap: 15px;
  margin-left: auto;
}

.rdp-btns svg {
  width: 14px;
  height: 15px;
}

/* Панель задач */
.taskbar {
  display: flex;
  height: 36px;
  padding: 4px 0 0 3px;
  background: #d6d1cd;
  border-top: 1px solid #d6d1cd;
  box-shadow: inset 0 1px #fff;
  color: #222;
  font: 11.5px "DejaVu Sans Condensed", "DejaVu Sans", sans-serif;
  white-space: nowrap;
}

.start,
.task {
  display: flex;
  align-items: center;
  height: 34px;
  border: solid;
  border-width: 1px 1px 0;
  border-color: #fff #6e6a67 #fff #fff;
}

.start {
  width: 50px;
}

.start svg {
  width: 16px;
  height: 16px;
}

.start b,
.onec span {
  color: #000;
  letter-spacing: -0.3px;
}

.sep {
  width: 2px;
  margin: 0 18px 0 8px;
  border-left: 1px solid #9a9693;
  border-right: 1px solid #fff;
}

.q-server {
  width: 29px;
  height: 30px;
}

.q-ps {
  width: 29px;
  height: 25px;
  margin: 5px 11px 0 21px;
}

.task {
  width: 160px;
  margin-right: 3px;
}

.folder svg {
  width: 22px;
  height: 30px;
  margin: 0 12px 0 4px;
}

.onec {
  border-color: #55514f #fff #fff #55514f;
  background: #fff;
  font-weight: bold;
}

.ball {
  width: 31px;
  height: 31px;
  margin: 0 3px 0 4px;
  padding: 8px 4px;
  border: 1px solid #d9b11c;
  border-radius: 50%;
  background: #fbdc2c;
  color: #d0211c;
}

.ball svg {
  width: 22px;
  height: 14px;
}

.excel svg {
  width: 30px;
  height: 28px;
  margin: 0 4px;
}

.excel span {
  letter-spacing: -0.3px;
}

.camera {
  position: absolute;
  left: 1144px;
  top: 921px;
  width: 780px;
  height: 159px;
  background: #000;
}
```
